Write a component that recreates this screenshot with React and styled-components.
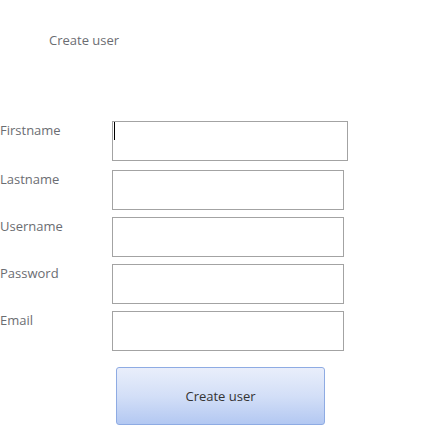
import React from "react";
import styled, { createGlobalStyle } from "styled-components";

const GlobalStyle = createGlobalStyle`
  html, body {
    margin: 0;
    padding: 0;
    background: #fff;
  }
  body {
    font-family: "Open Sans", "Liberation Sans", sans-serif;
    font-size: 13px;
    color: #6b6d72;
  }
`;

const Page = styled.div`
  width: 431px;
  height: 443px;
  padding-top: 31px;
  box-sizing: border-box;
`;

const Title = styled.h1`
  margin: 0 0 72px 49px;
  font-size: 13px;
  font-weight: normal;
  line-height: 18px;
  color: #6b6d72;
`;

const Form = styled.form`
  display: flex;
  flex-direction: column;
`;

const Row = styled.div`
  display: grid;
  grid-template-columns: 112px ${(p) => p.$width}px;
  align-items: start;
  margin-bottom: ${(p) => p.$gap}px;
`;

const Label = styled.label`
  padding-top: 0;
  line-height: 18px;
  color: #6b6d72;
`;

const Field = styled.div`
  position: relative;
`;

const Input = styled.input`
  display: block;
  box-sizing: border-box;
  width: 100%;
  height: 40px;
  margin: 0;
  padding: 0 2px;
  border: 1px solid #a3a3a3;
  background: #fff;
  font: inherit;
  color: #000;
  caret-color: transparent;
  outline: none;
`;

const Caret = styled.span`
  position: absolute;
  left: 2px;
  top: 1px;
  width: 1px;
  height: 18px;
  background: #000;
  pointer-events: none;
`;

const Actions = styled.div`
  padding: 9px 0 0 116px;
`;

const Button = styled.button`
  box-sizing: border-box;
  width: 209px;
  height: 58px;
  border: 1px solid #8eabe3;
  border-radius: 3px;
  background: linear-gradient(to bottom, #e9eefb 0%, #d3dff7 50%, #b3c8f2 100%);
  font-family: inherit;
  font-size: 13px;
  color: #333;
  cursor: pointer;
`;

const fields = [
  { id: "firstname", label: "Firstname", width: 236, gap: 9 },
  { id: "lastname", label: "Lastname", width: 232, gap: 7 },
  { id: "username", label: "Username", width: 232, gap: 7 },
  { id: "password", label: "Password", width: 232, gap: 7, type: "password" },
  { id: "email", label: "Email", width: 232, gap: 7, type: "email" },
];

export default function App() {
  return (
    <Page>
      <GlobalStyle />
      <Title>Create user</Title>
      <Form onSubmit={(e) => e.preventDefault()}>
        {fields.map((f, i) => (
          <Row key={f.id} $width={f.width} $gap={f.gap}>
            <Label htmlFor={f.id}>{f.label}</Label>
            <Field>
              <Input id={f.id} type={f.type || "text"} />
              {i === 0 && <Caret />}
            </Field>
          </Row>
        ))}
        <Actions>
          <Button type="submit">Create user</Button>
        </Actions>
      </Form>
    </Page>
  );
}
